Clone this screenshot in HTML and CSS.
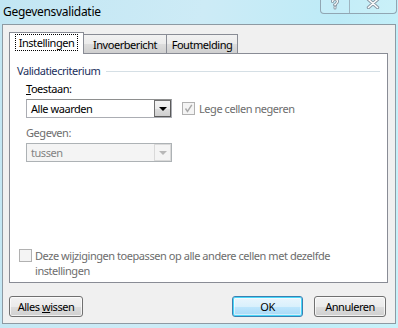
FILE: index.html
```html
<!DOCTYPE html>
<html>
<head>
<meta charset="utf-8">
<link rel="stylesheet" href="styles.css">
</head>
<body>
<div class="window">
  <div class="titlebar">
    <span class="title">Gegevensvalidatie</span>
    <div class="caption-btns">
      <span class="cb help">
        <svg width="10" height="12" viewBox="0 0 10 12"><path d="M2.5 3.6 C2.5 0.8 7.5 0.8 7.5 3.4 C7.5 5 5.5 5.2 5.5 6.8 L4.5 6.8 M5 9 L5 10" fill="none" stroke="#8a9aa6" stroke-width="3" stroke-linecap="round"/><path d="M2.5 3.6 C2.5 0.8 7.5 0.8 7.5 3.4 C7.5 5 5.5 5.2 5.5 6.8 L4.5 6.8 M5 9 L5 10" fill="none" stroke="#ffffff" stroke-width="1.1" stroke-linecap="round"/></svg>
      </span>
      <span class="cb close">
        <svg width="14" height="11" viewBox="0 0 14 11"><path d="M2.5 1.5 L11.5 9.5 M11.5 1.5 L2.5 9.5" fill="none" stroke="#8a9aa6" stroke-width="3.4" stroke-linecap="round"/><path d="M2.5 1.5 L11.5 9.5 M11.5 1.5 L2.5 9.5" fill="none" stroke="#ffffff" stroke-width="1.4" stroke-linecap="round"/></svg>
      </span>
    </div>
  </div>
  <div class="client">
    <div class="tabs">
      <div class="tab tab-active tab-1"><span class="focus">Instellingen</span></div>
      <div class="tab tab-2">Invoerbericht</div>
      <div class="tab tab-3">Foutmelding</div>
    </div>
    <div class="panel">
      <div class="group-head"><span class="group-title">Validatiecriterium</span><span class="rule"></span></div>
      <div class="field-label"><u>T</u>oestaan:</div>
      <div class="row">
        <div class="select">
          <span class="select-text">Alle waarden</span>
          <span class="drop"><span class="tri"></span></span>
        </div>
        <div class="check check-lege">
          <span class="box">
            <svg width="11" height="11" viewBox="0 0 11 11"><path d="M2.5 5.5 L4.5 8.5 L8.8 1.8" fill="none" stroke="#a8a8a8" stroke-width="1.4"/></svg>
          </span>
          <span class="check-text">Lege cellen negeren</span>
        </div>
      </div>
      <div class="field-label disabled gap">Gegeven:</div>
      <div class="row">
        <div class="select select-disabled">
          <span class="select-text">tussen</span>
          <span class="drop"><span class="tri"></span></span>
        </div>
      </div>
      <div class="spacer"></div>
      <div class="apply">
        <span class="box"></span>
        <span class="apply-text">Deze wijzigingen toepassen op alle andere cellen met dezelfde instellingen</span>
      </div>
    </div>
    <div class="buttons">
      <div class="btn btn-clear"><span>Alles <u>w</u>issen</span></div>
      <div class="btn-right">
        <div class="btn btn-default">OK</div>
        <div class="btn btn-cancel">Annuleren</div>
      </div>
    </div>
  </div>
</div>
</body>
</html>
```

FILE: styles.css
```css
* { box-sizing: border-box; }
html, body { margin: 0; padding: 0; }
body {
  font-family: "Noto Sans", "Open Sans", sans-serif;
  font-size: 11px;
  letter-spacing: -0.45px;
  color: #000;
  width: 398px;
  height: 328px;
  overflow: hidden;
}
u { text-underline-offset: 1px; }
.window {
  width: 398px;
  height: 328px;
  display: flex;
  flex-direction: column;
  background: linear-gradient(100deg, #c2e6f3 0%, #cdebf6 45%, #bdebf7 75%, #c9f2fa 100%);
  position: relative;
}
.titlebar {
  height: 24px;
  flex: none;
  position: relative;
  display: flex;
  align-items: center;
  padding-left: 3px;
}
.title {
  font-size: 12px;
  letter-spacing: -0.3px;
  line-height: 15px;
  margin-top: -2px;
  color: #000;
}
.caption-btns {
  position: absolute;
  top: -1px;
  right: 1px;
  width: 77px;
  height: 15px;
  display: flex;
  border: 1px solid #91a6b3;
  border-top: none;
  border-radius: 0 0 4px 4px;
  background: rgba(255,255,255,0.12);
}
.cb {
  display: flex;
  align-items: flex-start;
  justify-content: center;
  padding-top: 0;
}
.cb svg { margin-top: -1px; }
.help { width: 29px; border-right: 1px solid #9fb4c0; }
.close { flex: 1; }

.client {
  flex: 1;
  margin: 0 2px 4px 2px;
  border: 1px solid #8d9aa3;
  background: #f0f0f0;
  display: flex;
  flex-direction: column;
  padding: 7px 7px 6px 6px;
}
.tabs {
  height: 21px;
  display: flex;
  align-items: flex-end;
  position: relative;
  z-index: 2;
}
.tab {
  height: 19px;
  border: 1px solid #898c95;
  border-bottom: none;
  background: linear-gradient(#f2f2f2, #ebebeb 50%, #dddddd 51%, #cfcfcf);
  display: flex;
  align-items: center;
  justify-content: center;
  line-height: 15px;
  margin-left: -1px;
}
.tab-active {
  height: 22px;
  margin-bottom: -1px;
  background: #fff;
  margin-left: 0;
  padding-bottom: 3px;
  position: relative;
  z-index: 3;
}
.tab-1 { width: 75px; }
.tab-2 { width: 84px; }
.tab-3 { width: 72px; }
.focus {
  outline: 1px dotted #000;
  outline-offset: 1px;
  padding: 0 2px;
  line-height: 13px;
}
.panel {
  height: 230px;
  border: 1px solid #898c95;
  background: #fff;
  display: flex;
  flex-direction: column;
  padding: 0 0 4px 0;
  position: relative;
  z-index: 1;
}
.group-head {
  margin-top: 9px;
  padding-left: 7px;
  display: flex;
  align-items: center;
  line-height: 15px;
}
.group-title { color: #1c2f5c; }
.rule {
  flex: 1;
  height: 1px;
  background: #d5dfe5;
  margin: 1px 7px 0 6px;
}
.field-label {
  margin-top: 3px;
  padding-left: 16px;
  line-height: 15px;
}
.field-label.gap { margin-top: 7px; }
.disabled { color: #6d6d6d; }
.row {
  display: flex;
  align-items: flex-start;
  padding-left: 16px;
  margin-top: 3px;
}
.select {
  width: 146px;
  height: 19px;
  border: 1px solid #abadb3;
  border-top-color: #8e8f8f;
  display: flex;
  align-items: center;
  background: #fff;
}
.select-text {
  flex: 1;
  padding-left: 4px;
  line-height: 15px;
}
.drop {
  width: 17px;
  height: 17px;
  border: 1px solid #707070;
  border-right-color: #5a5a5a;
  border-bottom-color: #5a5a5a;
  background: linear-gradient(#f2f2f2, #ebebeb 50%, #dddddd 51%, #cfcfcf);
  display: flex;
  align-items: center;
  justify-content: center;
}
.tri {
  width: 0; height: 0;
  border-left: 4px solid transparent;
  border-right: 4px solid transparent;
  border-top: 4px solid #000;
  margin-top: 1px;
}
.select-disabled {
  background: #f4f4f4;
  border-color: #adb2b5;
  color: #838383;
}
.select-disabled .drop {
  border-color: #d9d9d9;
  background: #f4f4f4;
}
.select-disabled .tri { border-top-color: #b8b8b8; }
.check {
  display: flex;
  align-items: center;
  margin-left: 10px;
  margin-top: 2px;
}
.box {
  width: 13px;
  height: 13px;
  border: 1px solid #b1b1b1;
  background: #f4f4f4;
  display: flex;
  align-items: center;
  justify-content: center;
  flex: none;
}
.check-text {
  margin-left: 4px;
  color: #6d6d6d;
  line-height: 15px;
}
.spacer { flex: 1; }
.apply {
  display: flex;
  align-items: flex-start;
  padding-left: 9px;
}
.apply .box { margin-top: 1px; }
.apply-text {
  margin-left: 3px;
  color: #6d6d6d;
  line-height: 15px;
  width: 305px;
}
.buttons {
  margin-top: 13px;
  height: 21px;
  display: flex;
  justify-content: space-between;
  padding-right: 2px;
}
.btn-right { display: flex; gap: 11px; }
.btn {
  height: 21px;
  border: 1px solid #707070;
  border-radius: 3px;
  background: linear-gradient(#f2f2f2, #ebebeb 50%, #dddddd 51%, #cfcfcf);
  box-shadow: inset 0 0 0 1px rgba(255,255,255,0.7);
  display: flex;
  align-items: center;
  justify-content: center;
  line-height: 15px;
}
.btn-clear { width: 74px; }
.btn-default {
  width: 71px;
  border-color: #3c7fb1;
  box-shadow: inset 0 0 0 1px #48d7f9, inset 0 0 0 2px rgba(255,255,255,0.5);
  background: linear-gradient(#eaf6fd, #d9f0fc 50%, #bee6fd 51%, #a7d9f5);
}
.btn-cancel { width: 72px; }
```
